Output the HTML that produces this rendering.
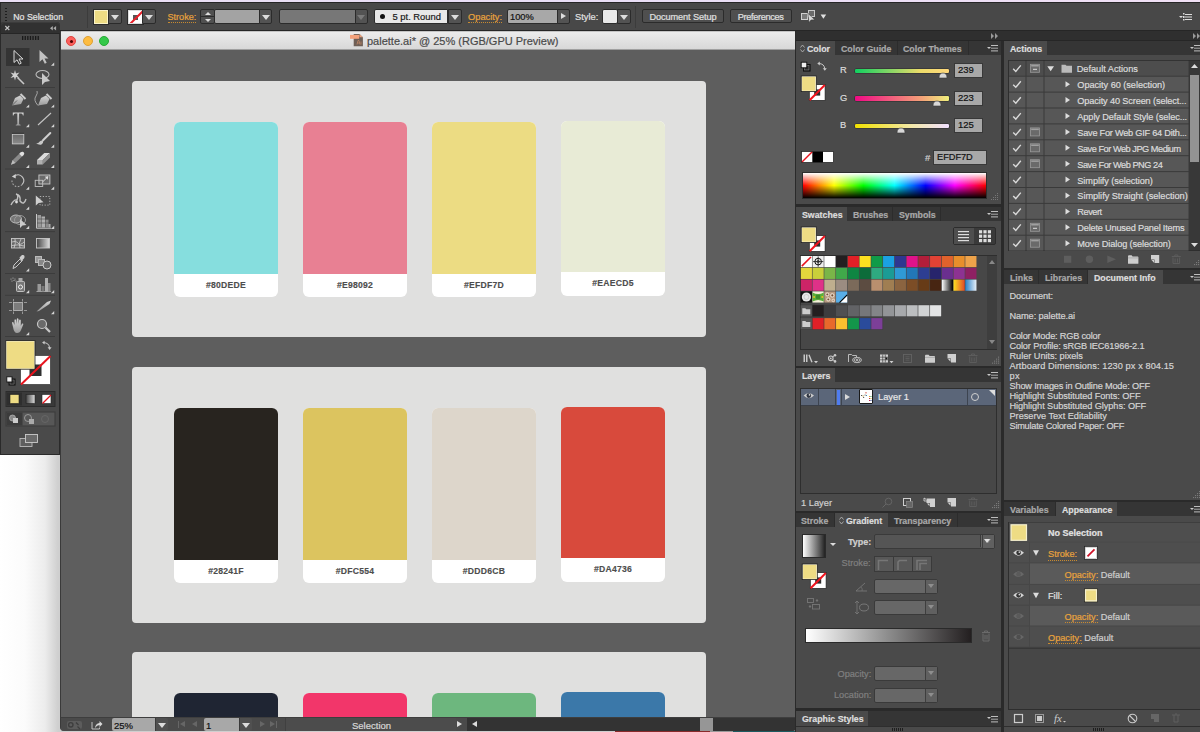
<!DOCTYPE html>
<html><head><meta charset="utf-8">
<style>
*{box-sizing:border-box;margin:0;padding:0}
html,body{width:1200px;height:732px;overflow:hidden;background:#fff;font-family:"Liberation Sans",sans-serif;}
.a{position:absolute}
svg{position:absolute;overflow:visible}
#desk{left:0;top:0;width:1200px;height:732px;background:linear-gradient(90deg,#ffffff 0,#fbfbfb 25px,#ececec 45px,#cfcfcf 58px)}
#lav{left:0;top:0;width:1200px;height:3px;background:linear-gradient(90deg,#eadff4,#e9def6 50%,#f0e0f4);border-bottom:1px solid #262626}
#ctrl{left:0;top:3px;width:1200px;height:28px;background:#484848;border-bottom:1px solid #262626;border-left:1px solid #2a2a2a}
.tx{position:absolute;white-space:nowrap;color:#d2d2d2;font-size:9px;line-height:11px}
.or{color:#e6a23e;border-bottom:1px dotted #c88a30;line-height:9px}
.btn{position:absolute;background:#4f4f4f;border:1px solid #2b2b2b;border-radius:2px}
.dd{position:absolute;background:#535353;border:1px solid #2b2b2b;border-radius:0 2px 2px 0}
.dd:after{content:"";position:absolute;left:50%;top:50%;margin:-2px 0 0 -4px;border-left:4px solid transparent;border-right:4px solid transparent;border-top:5px solid #dcdcdc}
.fld{position:absolute;border:1px solid #2b2b2b;border-radius:2px 0 0 2px}
.sw{position:absolute;width:104px;height:175px;background:#fff;border-radius:6px;overflow:hidden}
.sw .c{height:152px}
.sw .t{height:23px;text-align:center;font-weight:bold;font-size:8.6px;line-height:23px;color:#4d4d4d;letter-spacing:0.25px;-webkit-text-stroke:0.15px #4d4d4d}
.pn{position:absolute;background:#4a4a4a}
.tabbar{position:absolute;background:#353535;height:14px}
.tab{position:absolute;top:0;height:14px;font-weight:bold;font-size:8.8px;line-height:16px;color:#a9a9a9;white-space:nowrap;border-right:1px solid #2c2c2c}
.tab.on{background:#4a4a4a;color:#dedede;border-right:none}
.menu{position:absolute;width:12px;height:8px}
.menu:before{content:"";position:absolute;left:0;top:2.2px;border-left:2px solid transparent;border-right:2px solid transparent;border-top:2.5px solid #c8c8c8}
.menu:after{content:"";position:absolute;left:4.4px;top:0.5px;width:7px;height:1.3px;background:#bdbdbd;box-shadow:0 2.7px 0 #a8a8a8,0 5.4px 0 #bdbdbd}
.pt{position:absolute;white-space:nowrap;color:#d0d0d0;font-size:9.2px;line-height:11px}
.dim{color:#808080}
.ddb{position:absolute;background:#676767;border:1px solid #3a3a3a;border-radius:2px}
.ddb:after{content:"";position:absolute;right:0;top:0;width:11px;height:100%;border-left:1px solid #3e3e3e;background:#606060}
.ddb:before{content:"";position:absolute;right:3px;top:50%;margin-top:-2px;border-left:3px solid transparent;border-right:3px solid transparent;border-top:4px solid #8e8e8e;z-index:1}
.pt.or,.tx.or,span.or{color:#e8a33d}
.pt,.tx,.tab{-webkit-text-stroke:0.2px currentColor}
.dimdd:after{border-top-color:#7a7a7a}
</style></head><body>
<div id="desk" class="a"></div>
<div id="lav" class="a"></div>
<div id="ctrl" class="a">
  <div class="a" style="left:4px;top:5px;width:2px;height:17px;background:repeating-linear-gradient(#1e1e1e 0 1.5px,transparent 1.5px 3px)"></div>
  <div class="tx" style="left:12.2px;top:8.8px;font-size:8.8px;color:#e4e4e4">No Selection</div>
  <div class="a" style="left:86px;top:3px;width:1px;height:22px;background:#3c3c3c"></div>
  <div class="a" style="left:92.6px;top:6.5px;width:14.5px;height:14.5px;background:#eedc84;border:1px solid #fbf3c8;box-shadow:0 0 0 1px #2b2b2b"></div>
  <div class="dd" style="left:107.1px;top:6px;width:14px;height:15px"></div>
  <div class="a" style="left:127.1px;top:6.5px;width:14.5px;height:14.5px;background:#fff;border:1px solid #ddd;box-shadow:0 0 0 1px #2b2b2b;overflow:hidden">
    <div class="a" style="left:4px;top:4px;width:5px;height:5px;background:#555"></div>
    <div class="a" style="left:-3px;top:6px;width:20px;height:2px;background:#e8202a;transform:rotate(-45deg)"></div>
  </div>
  <div class="dd" style="left:141.1px;top:6px;width:14px;height:15px"></div>
  <div class="tx or" style="left:166.5px;top:10px;font-size:9.1px">Stroke:</div>
  <div class="btn" style="left:199.1px;top:6px;width:15px;height:15px;background:#505050"></div>
  <div class="a" style="left:200.1px;top:13px;width:13px;height:1px;background:#2b2b2b"></div>
  <div class="a" style="left:204.1px;top:9px;border-left:3px solid transparent;border-right:3px solid transparent;border-bottom:3px solid #ddd"></div>
  <div class="a" style="left:204.1px;top:16px;border-left:3px solid transparent;border-right:3px solid transparent;border-top:3px solid #ddd"></div>
  <div class="fld" style="left:213.1px;top:6px;width:46px;height:15px;background:#a3a3a3"></div>
  <div class="dd" style="left:258.1px;top:6px;width:13px;height:15px"></div>
  <div class="fld" style="left:277.5px;top:6px;width:77px;height:15px;background:#777"></div>
  <div class="dd dimdd" style="left:353.5px;top:6px;width:13.5px;height:15px"></div>
  <div class="fld" style="left:373px;top:6px;width:74px;height:15px;background:#e8e8e8"></div>
  <div class="a" style="left:378.8px;top:11.3px;width:5px;height:5px;border-radius:50%;background:#111"></div>
  <div class="tx" style="left:391.5px;top:8.2px;color:#1a1a1a;font-size:9.4px">5 pt. Round</div>
  <div class="dd" style="left:446.5px;top:6px;width:14px;height:15px"></div>
  <div class="tx or" style="left:467px;top:10px;font-size:9.3px">Opacity:</div>
  <div class="fld" style="left:506px;top:6px;width:51px;height:15px;background:#a8a8a8"></div>
  <div class="tx" style="left:509px;top:9px;color:#111;font-size:9.3px">100%</div>
  <div class="btn" style="left:556px;top:6px;width:13px;height:15px;background:#535353;border-radius:0 2px 2px 0"></div>
  <div class="a" style="left:560px;top:10px;border-top:3.5px solid transparent;border-bottom:3.5px solid transparent;border-left:5px solid #ddd;z-index:2"></div>
  <div class="tx" style="left:574px;top:9px;font-size:9.3px;color:#e0e0e0">Style:</div>
  <div class="btn" style="left:601px;top:6px;width:16px;height:15px;background:#e8e8e8;border-color:#2b2b2b"></div>
  <div class="dd" style="left:616px;top:6px;width:14px;height:15px"></div>
  <div class="a" style="left:634px;top:3px;width:1px;height:22px;background:#3c3c3c"></div>
  <div class="btn" style="left:641px;top:6px;width:82px;height:14px"></div>
  <div class="tx" style="left:648.5px;top:9px;font-size:9.2px;color:#e0e0e0;letter-spacing:-0.102px">Document Setup</div>
  <div class="btn" style="left:729px;top:6px;width:62px;height:14px"></div>
  <div class="tx" style="left:736.7px;top:9px;font-size:9.2px;color:#e0e0e0;letter-spacing:-0.330px">Preferences</div>
  <svg style="left:0;top:-3px" width="840" height="30" viewBox="0 0 840 30"><rect x="800.5" y="13.5" width="6" height="6" fill="#7a7a7a" stroke="#d0d0d0" stroke-width="1"/><rect x="807.5" y="10.5" width="6" height="6" fill="#6a6a6a" stroke="#c8c8c8" stroke-width="1"/><path d="M806.8 13.2 L813.8 19.8 L810 20 L808 22.5Z" fill="#d8d8d8" stroke="#333" stroke-width="0.5"/><path d="M819.6 14.4 H825.2 L822.4 18.8Z" fill="#e0e0e0"/></svg>
  <svg style="left:1178px;top:10px" width="14" height="10" viewBox="0 0 14 10"><path d="M0 3 L4 3 L2 5Z" fill="#ddd"/><rect x="4" y="0" width="1.5" height="1.5" fill="#ddd"/><rect x="4" y="3" width="1.5" height="2" fill="#ddd"/><rect x="4" y="6" width="1.5" height="1.5" fill="#ddd"/><rect x="6" y="1" width="7" height="1" fill="#ddd"/><rect x="6" y="3.5" width="7" height="1" fill="#ddd"/><rect x="6" y="6" width="7" height="1" fill="#ddd"/></svg>
</div>
<div class="a" style="left:60px;top:31px;width:736px;height:700px;background:#5e5e5e;border-radius:0 0 4px 4px;overflow:hidden;border-left:1px solid #3a3a3a">
  <div class="a" style="left:0;top:0;width:735px;height:19px;background:linear-gradient(#c4c4c4 0,#c4c4c4 1px,#ebebeb 1.5px,#d8d8d8);border-bottom:1px solid #a0a0a0"></div>
  <div class="a" style="left:5px;top:5px;width:10px;height:10px;border-radius:50%;background:#fc605c;border:0.5px solid #e0443e"></div>
  <div class="a" style="left:8.5px;top:8.5px;width:3px;height:3px;border-radius:50%;background:#4d0000"></div>
  <div class="a" style="left:21.7px;top:5px;width:10px;height:10px;border-radius:50%;background:#fdbc40;border:0.5px solid #dea034"></div>
  <div class="a" style="left:38.3px;top:5px;width:10px;height:10px;border-radius:50%;background:#34c84a;border:0.5px solid #27aa35"></div>
  <svg style="left:289px;top:3px" width="14" height="13" viewBox="0 0 14 13"><path d="M3.7 0.1 H9.5 L12.9 3.2 V12.3 H3.7Z" fill="#6e5f56"/><path d="M9.5 0.1 L12.9 3.2 H9.5Z" fill="#e8a07c"/><rect x="0" y="0.9" width="9.2" height="3.9" fill="#f4a27c"/><path d="M7 10.5 L8 6.5 H9 L10 10.5 M7.5 9 H9.5 M11 7.5 V10.5" fill="none" stroke="#c88a66" stroke-width="0.7"/></svg>
  <div class="tx" style="left:306px;top:4px;color:#4a4a4a;font-size:11px;line-height:13px">palette.ai* @ 25% (RGB/GPU Preview)</div>
  <!-- artboards -->
  <div class="a" style="left:71px;top:50px;width:574px;height:256px;background:#e0e0df;border-radius:4px">
    <div class="a sw" style="left:42px;top:41px"><div class="c" style="background:#86dede"></div><div class="t">#80DEDE</div></div>
    <div class="a sw" style="left:171px;top:41px"><div class="c" style="background:#e88093"></div><div class="t">#E98092</div></div>
    <div class="a sw" style="left:300px;top:41px"><div class="c" style="background:#ecdc83"></div><div class="t">#EFDF7D</div></div>
    <div class="a sw" style="left:429px;top:40px"><div class="c" style="background:#e8ebd6;height:151px"></div><div class="t">#EAECD5</div></div>
  </div>
  <div class="a" style="left:71px;top:336px;width:574px;height:256px;background:#e0e0df;border-radius:4px">
    <div class="a sw" style="left:42px;top:41px"><div class="c" style="background:#28241f"></div><div class="t">#28241F</div></div>
    <div class="a sw" style="left:171px;top:41px"><div class="c" style="background:#dcc45f"></div><div class="t">#DFC554</div></div>
    <div class="a sw" style="left:300px;top:41px"><div class="c" style="background:#ddd6cb"></div><div class="t">#DDD6CB</div></div>
    <div class="a sw" style="left:429px;top:39.5px"><div class="c" style="background:#d84a3c;height:151px"></div><div class="t">#DA4736</div></div>
  </div>
  <div class="a" style="left:71px;top:621px;width:574px;height:256px;background:#e0e0df;border-radius:4px">
    <div class="a sw" style="left:42px;top:41px"><div class="c" style="background:#1f2533"></div></div>
    <div class="a sw" style="left:171px;top:41px"><div class="c" style="background:#f2366a"></div></div>
    <div class="a sw" style="left:300px;top:41px"><div class="c" style="background:#6db77e"></div></div>
    <div class="a sw" style="left:429px;top:39.5px"><div class="c" style="background:#3b78a9"></div></div>
  </div>
  <!-- status bar -->
  <div class="a" style="left:0;top:686px;width:735px;height:14px;background:#4a4a4a;border-top:1px solid #3e3e3e"></div>
  <div class="a" style="left:5.8px;top:689.8px;width:15.5px;height:8px;border-radius:2px;background:#5c5c5c"></div>
  <svg style="left:0;top:686px" width="50" height="14" viewBox="0 0 50 14"><circle cx="9.8" cy="7.8" r="2.2" fill="none" stroke="#3e3e3e" stroke-width="1.4"/><path d="M15 5.5 L17.5 8 M16.5 9.5 L19 12" stroke="#3e3e3e" stroke-width="1.3"/>
  <path d="M31 5 V12 H38.5 V10.5" fill="none" stroke="#c0c0c0" stroke-width="1"/><path d="M34 11 Q34.5 6.5 38.5 6 V4 L41.5 7 L38.5 10 V8 Q36 8 34 11Z" fill="#d8d8d8"/></svg>
  <div class="fld" style="left:51px;top:687px;width:43px;height:13px;background:#a8a8a8;border:none"></div>
  <div class="tx" style="left:53px;top:689px;color:#111;font-size:9.5px">25%</div>
  <div class="dd" style="left:94px;top:687px;width:13px;height:13px;background:#505050;border:none;border-left:1px solid #3a3a3a"></div>
  <div class="a" style="left:117px;top:690px;width:1px;height:7px;background:#666"></div>
  <div class="a" style="left:119px;top:690px;border-top:3.5px solid transparent;border-bottom:3.5px solid transparent;border-right:5px solid #666"></div>
  <div class="a" style="left:131px;top:690px;border-top:3.5px solid transparent;border-bottom:3.5px solid transparent;border-right:5px solid #666"></div>
  <div class="fld" style="left:143px;top:687px;width:35px;height:13px;background:#a8a8a8;border:none"></div>
  <div class="tx" style="left:145px;top:689px;color:#111;font-size:9.5px">1</div>
  <div class="dd" style="left:178px;top:687px;width:13px;height:13px;background:#505050;border:none;border-left:1px solid #3a3a3a"></div>
  <div class="a" style="left:199px;top:690px;border-top:3.5px solid transparent;border-bottom:3.5px solid transparent;border-left:5px solid #666"></div>
  <div class="a" style="left:209px;top:690px;border-top:3.5px solid transparent;border-bottom:3.5px solid transparent;border-left:5px solid #666"></div>
  <div class="a" style="left:215px;top:690px;width:1px;height:7px;background:#666"></div>
  <div class="a" style="left:224px;top:687px;width:171px;height:13px;background:#4c4c4c;border-left:1px solid #404040"></div>
  <div class="tx" style="left:291px;top:689px;color:#d8d8d8;font-size:9.5px">Selection</div>
  <div class="a" style="left:396px;top:690px;border-top:3.5px solid transparent;border-bottom:3.5px solid transparent;border-left:5px solid #ddd"></div>
  <div class="a" style="left:406px;top:687px;width:329px;height:13px;background:#333"></div>
  <div class="a" style="left:411px;top:690px;border-top:3.5px solid transparent;border-bottom:3.5px solid transparent;border-right:5px solid #ddd"></div>
  <div class="a" style="left:639px;top:687px;width:13px;height:13px;background:#969696"></div>
</div>
<div class="a" style="left:0;top:22px;width:60px;height:432.5px;background:#4a4a4a;border:1px solid #2a2a2a;border-top:none;border-radius:4px 4px 0 0"></div>
<div class="a" style="left:1px;top:22.4px;width:58.5px;height:11.6px;background:#313131;border-radius:4px 4px 0 0;border-bottom:1px solid #262626;box-shadow:inset 0 1px 0 #3c3c3c"></div>
<svg style="left:0;top:22px" width="61" height="433" viewBox="0 0 61 433">
 <g stroke="#c4c4c4" stroke-width="1.1" fill="none"><path d="M5.3 4 L9.3 8 M9.3 4 L5.3 8"/></g>
 <path d="M50 6.2 L52.8 4 V8.4Z M53.3 6.2 L56.1 4 V8.4Z" fill="#aaa"/>
 <g fill="#1a1a1a"><rect x="22.0" y="14" width="1.3" height="4"/><rect x="24.6" y="14" width="1.3" height="4"/><rect x="27.2" y="14" width="1.3" height="4"/><rect x="29.8" y="14" width="1.3" height="4"/><rect x="32.4" y="14" width="1.3" height="4"/><rect x="35.0" y="14" width="1.3" height="4"/><rect x="37.6" y="14" width="1.3" height="4"/></g>
 <g stroke="#3c3c3c" stroke-width="1"><path d="M5 65.5 H55 M5 147 H55 M5 209.6 H55 M5 251.5 H55 M5 273.3 H55 M5 314.5 H55"/></g>
</svg>
<svg style="left:0;top:0" width="61" height="460" viewBox="0 0 61 460">
 <defs><linearGradient id="tg" x1="0" y1="0" x2="0" y2="1"><stop offset="0" stop-color="#d6d6d6"/><stop offset="1" stop-color="#9a9a9a"/></linearGradient></defs>
 <rect x="6" y="48" width="23.5" height="18" fill="#343434"/>
 <!-- selection -->
 <path d="M14 50.5 L14 62.5 L17 59.8 L19.3 64.2 L21.2 63.2 L19 59 L23 59Z" fill="#3a3a3a" stroke="#d8d8d8" stroke-width="1"/>
 <!-- direct select -->
 <path d="M39.5 50 L39.5 62 L42.5 59.3 L44.8 63.7 L46.7 62.7 L44.5 58.5 L48.5 58.5Z" fill="#c2c2c2"/>
 <g fill="#d4d4d4"><path d="M51 65.8 L54.2 62.599999999999994 V65.8Z M26 107.6 L29.2 104.39999999999999 V107.6Z M51 107.6 L54.2 104.39999999999999 V107.6Z M26 127.3 L29.2 124.1 V127.3Z M51 127.3 L54.2 124.1 V127.3Z M26 147.8 L29.2 144.60000000000002 V147.8Z M51 147.8 L54.2 144.60000000000002 V147.8Z M26 167.9 L29.2 164.70000000000002 V167.9Z M51 167.9 L54.2 164.70000000000002 V167.9Z M26 189.7 L29.2 186.5 V189.7Z M51 189.7 L54.2 186.5 V189.7Z M26 209.8 L29.2 206.60000000000002 V209.8Z M26 229 L29.2 225.8 V229Z M51 229 L54.2 225.8 V229Z M26 271.5 L29.2 268.3 V271.5Z M26 293.3 L29.2 290.1 V293.3Z M51 293.3 L54.2 290.1 V293.3Z M51 314.3 L54.2 311.1 V314.3Z M26 335.3 L29.2 332.1 V335.3Z "/></g>
 <!-- magic wand -->
 <path d="M15 70 L16 73.5 L19.5 72.5 L17 75.2 L19.5 78 L16 77 L15 80.5 L14 77 L10.5 78 L13 75.2 L10.5 72.5 L14 73.5Z" fill="#d0d0d0"/>
 <path d="M17.5 77.5 L24 84" stroke="#c8c8c8" stroke-width="1.6"/>
 <!-- lasso -->
 <ellipse cx="42.5" cy="74.5" rx="6.5" ry="4" fill="none" stroke="#bbb" stroke-width="1.1"/>
 <path d="M42 73 L42 85 L45 82 L50 81Z" fill="#c8c8c8"/>
 <!-- pen -->
 <path d="M12 105.5 L15 98 L20 95.5 L23.5 99 L21 104 Z" fill="url(#tg)"/><path d="M20.5 94 L25.5 99" stroke="#ccc" stroke-width="2"/><path d="M12 105.5 L17 100.5" stroke="#555" stroke-width="0.8"/>
 <!-- curvature pen -->
 <path d="M38 105.5 L41 98 L46 95.5 L49.5 99 L47 104 Z" fill="url(#tg)"/><path d="M46.5 94 L51.5 99" stroke="#ccc" stroke-width="2"/><path d="M38 105.5 Q33 100 36 96 Q38 93 37 91" fill="none" stroke="#bbb" stroke-width="0.8"/>
 <!-- type -->
 <path d="M12.8 112.5 H23.6 V115.5 H22.9 Q22.6 113.6 21.3 113.6 H19.1 V123.8 Q19.2 124.8 20.6 124.8 V125.5 H15.8 V124.8 Q17.2 124.8 17.3 123.8 V113.6 H15.1 Q13.8 113.6 13.5 115.5 H12.8Z" fill="url(#tg)"/>
 <!-- line -->
 <path d="M38 125 L51 113" stroke="#c4c4c4" stroke-width="1.1"/>
 <!-- rect -->
 <defs><linearGradient id="rg" x1="0" y1="0" x2="0" y2="1"><stop offset="0" stop-color="#6a6a6a"/><stop offset="1" stop-color="#8c8c8c"/></linearGradient></defs>
 <rect x="12.3" y="134.3" width="11.5" height="9.6" fill="url(#rg)" stroke="#cfcfcf" stroke-width="0.8"/><path d="M12 133.3 H24" stroke="#222" stroke-width="0.6"/>
 <!-- brush -->
 <path d="M50.3 133 L43 140.3" stroke="#cfcfcf" stroke-width="2" stroke-linecap="round"/>
 <path d="M35.5 143.3 Q38 143.8 40 141.2 Q41.5 140 43.2 141 Q43.5 143.5 41.5 144.6 Q39 145.3 35.5 143.3Z" fill="#c8c8c8"/>
 <!-- pencil -->
 <path d="M11 164.7 L12.6 160.3 L20.8 152.3 Q22.5 151 23.8 152.5 Q24.8 153.8 23.6 155.1 L15.4 163.1Z" fill="#8a8a8a"/>
 <path d="M20.8 152.3 Q22.5 151 23.8 152.5 Q24.8 153.8 23.6 155.1 L22 156.6 L19.3 153.8Z" fill="#e0e0e0"/>
 <path d="M11 164.7 L12.6 160.3 L15.4 163.1Z" fill="#bdbdbd"/>
 <!-- eraser -->
 <path d="M37 160 L44.3 153 H50 L42.8 160Z" fill="#dcdcdc"/><path d="M37 160 H42.8 V164.5 H37Z" fill="#b0b0b0"/><path d="M42.8 160 L50 153 V157.5 L42.8 164.5Z" fill="#8e8e8e"/>
 <!-- rotate -->
 <path d="M15.2 175.6 A5.7 5.7 0 0 1 22 184.6" fill="none" stroke="#c4c4c4" stroke-width="1.1"/>
 <path d="M22 184.6 A5.7 5.7 0 0 1 12 180.3" fill="none" stroke="#a8a8a8" stroke-width="1.1" stroke-dasharray="1.6 1.5"/>
 <path d="M11.8 176.6 L15.8 174 L15.7 178.4Z" fill="#d0d0d0"/>
 <!-- scale -->
 <rect x="38.9" y="175" width="11" height="9" fill="#6a6a6a" stroke="#c8c8c8" stroke-width="0.9"/>
 <rect x="35.2" y="180.3" width="7.5" height="6.2" fill="none" stroke="#c0c0c0" stroke-width="0.9"/>
 <path d="M42.5 182 L47.8 176.8" stroke="#e0e0e0" stroke-width="0.9"/><path d="M48.3 176.3 L44.8 176.8 L47.8 179.8Z" fill="#e0e0e0"/>
 <!-- width -->
 <path d="M11 205 Q14 199 17 200 Q19 195 16 194 Q21 195 20 201 Q24 206 26 199" fill="none" stroke="#c0c0c0" stroke-width="1.4"/>
 <circle cx="16.5" cy="202" r="1.4" fill="#ddd"/>
 <!-- free transform -->
 <rect x="40" y="196.5" width="9.8" height="8.6" fill="none" stroke="#bbb" stroke-width="0.9" stroke-dasharray="1.2 1.6"/>
 <path d="M35.8 195.5 L35.8 205.5 L38.6 203 L43.5 202.3Z" fill="#cfcfcf"/>
 <!-- shape builder -->
 <ellipse cx="16" cy="219" rx="5.5" ry="4" fill="#777" stroke="#bbb"/><ellipse cx="20" cy="220" rx="5.5" ry="4.5" fill="none" stroke="#999"/>
 <path d="M20 219 L20 228 L22.5 225.5 L26.5 225Z" fill="#ccc"/>
 <!-- graph -->
 <path d="M36.5 214 V228.2 H51" fill="none" stroke="#c8c8c8" stroke-width="1"/>
 <rect x="37.5" y="215" width="3.5" height="12.5" fill="#9a9a9a"/><rect x="41.5" y="216.5" width="3.5" height="11" fill="#b0b0b0"/><rect x="45.5" y="219.5" width="3" height="8" fill="#8a8a8a"/><rect x="48.5" y="224" width="2" height="3.5" fill="#aaa"/>
 <path d="M37 219 H49 M37 223 H49" stroke="#4a4a4a" stroke-width="0.6"/>
 <!-- mesh -->
 <rect x="11.5" y="238.5" width="13" height="9.5" fill="#6a6a6a" stroke="#c8c8c8" stroke-width="0.9"/><path d="M12 242 Q16 240 18 243 T24 242 M14 248 Q16 244 15 239 M20 248 Q18 243 21 239 M12 245.5 Q18 244 24 246" fill="none" stroke="#ddd" stroke-width="0.7"/>
 <!-- gradient tool -->
 <defs><linearGradient id="gg" x1="0" x2="1"><stop offset="0" stop-color="#444"/><stop offset="1" stop-color="#ddd"/></linearGradient></defs>
 <rect x="36.5" y="238.5" width="13" height="9.5" fill="url(#gg)" stroke="#c8c8c8" stroke-width="0.9"/>
 <!-- eyedropper -->
 <path d="M13 268.5 L14 265 L20.5 258.5 L22.5 260.5 L16 267Z" fill="none" stroke="#c8c8c8" stroke-width="1"/><path d="M19.5 257.5 L22 255 Q24 254.5 24.5 256 Q25 258 23 259.5 L21 261.5Z" fill="#ccc"/>
 <!-- blend -->
 <rect x="35.5" y="256.5" width="6" height="6" fill="#999" stroke="#bbb"/><rect x="38.5" y="259.5" width="6" height="6" fill="#888" stroke="#bbb"/><circle cx="47" cy="265" r="4" fill="#666" stroke="#ccc"/>
 <!-- symbol sprayer -->
 <g fill="#bbb"><circle cx="11" cy="279" r="0.6"/><circle cx="13" cy="278" r="0.6"/><circle cx="15" cy="279" r="0.6"/><circle cx="12" cy="281" r="0.6"/><circle cx="14" cy="280.5" r="0.6"/><circle cx="16" cy="281" r="0.6"/></g>
 <rect x="16.5" y="281.5" width="8" height="10" rx="1" fill="#777" stroke="#c0c0c0"/><rect x="18.5" y="278" width="4" height="3.5" fill="#aaa"/><circle cx="20.5" cy="287" r="2" fill="none" stroke="#eee" stroke-width="1"/>
 <!-- column graph -->
 <path d="M36.5 291.5 H51" stroke="#aaa"/><rect x="37.5" y="284" width="3.5" height="7.5" fill="#999"/><rect x="41.5" y="286" width="3" height="5.5" fill="#777"/><rect x="45" y="278" width="3" height="13.5" fill="#b0b0b0"/><rect x="48" y="283" width="2.5" height="8.5" fill="#888"/>
 <!-- artboard -->
 <rect x="13.5" y="302.5" width="9" height="8" fill="#7c7c7c" stroke="#c0c0c0" stroke-width="0.8"/><path d="M9 302.5 H12 M24 302.5 H27 M9 310.5 H12 M24 310.5 H27 M13.5 299 V301.5 M22.5 299 V301.5 M13.5 311.5 V314 M22.5 311.5 V314" stroke="#aaa" stroke-width="0.8"/>
 <!-- slice/knife -->
 <path d="M36.5 311.5 L47 302 L51 300.5 L49.5 304 L39 311Z" fill="url(#tg)"/>
 <!-- hand -->
 <path d="M13 327 L12 323 Q12 321.5 13.2 322 L14.5 325 L14.5 320 Q15 318.5 16 320 L16.5 324 L16.8 319 Q17.5 317.5 18.5 319 L18.6 324 L19.2 320 Q20 318.8 20.8 320.3 L20.8 326 L22 323.5 Q23.5 323 23.3 324.5 L21 330 Q20 333 17 333 Q14 333 13 327Z" fill="url(#tg)"/>
 <!-- zoom -->
 <circle cx="42" cy="324" r="4.5" fill="#6a6a6a" stroke="#c8c8c8" stroke-width="1.2"/><path d="M45.5 327.5 L50 332" stroke="#c8c8c8" stroke-width="2.2"/>
 <!-- fill/stroke -->

 <path d="M43.3 342.6 Q49.3 342.6 49.6 348.3" fill="none" stroke="#c8c8c8" stroke-width="1"/><path d="M44.6 340.7 L42.1 342.6 L44.6 344.5Z M47.6 347.3 L49.6 349.9 L51.6 347.3Z" fill="#c8c8c8"/>
 <rect x="20.5" y="355.5" width="30" height="29" fill="#fff" stroke="#222" stroke-width="0.6"/>
 <rect x="29.5" y="364.5" width="12" height="11.5" fill="#2f2f2f"/>
 <rect x="5.8" y="340.6" width="29.2" height="28.6" fill="#f2ecc4" stroke="#1e1e1e" stroke-width="0.8"/><rect x="6.8" y="341.6" width="27.2" height="26.6" fill="#eedc84"/>
 <path d="M21 384.5 L50.5 356" stroke="#e8141e" stroke-width="2"/>
 <rect x="9.3" y="379.3" width="5.5" height="5.5" fill="#2a2a2a" stroke="#111" stroke-width="1.5"/><rect x="10" y="380" width="4.1" height="4.1" fill="none" stroke="#9a9a9a" stroke-width="0.5"/><rect x="6.8" y="376.8" width="5.2" height="5.2" fill="#eee" stroke="#111" stroke-width="0.9"/>
 <!-- color mode row -->
 <rect x="6" y="391.5" width="49" height="15" fill="#3a3a3a" stroke="#2c2c2c"/>
 <rect x="7" y="392.5" width="15" height="13" fill="#2e2e2e"/>
 <rect x="10" y="394.5" width="9" height="9" fill="#eedc84" stroke="#222" stroke-width="0.6"/>
 <rect x="26" y="394.5" width="9" height="9" fill="url(#gg)" stroke="#222" stroke-width="0.6"/>
 <rect x="42" y="394.5" width="9" height="9" fill="#fff" stroke="#222" stroke-width="0.6"/><path d="M42.5 403.5 L51 395" stroke="#e8141e" stroke-width="1.3"/>
 <!-- draw modes -->
 <rect x="6" y="412" width="49" height="14" fill="#575757" stroke="#3a3a3a"/>
 <rect x="6.5" y="412.5" width="16" height="13" fill="#3b3b3b"/>
 <circle cx="12.5" cy="418" r="3" fill="#888" stroke="#bbb" stroke-width="0.7"/><rect x="13" y="418" width="5" height="5" fill="#ccc"/>
 <circle cx="28" cy="418" r="3.5" fill="none" stroke="#aaa" stroke-width="0.8"/><rect x="29" y="419" width="5" height="5" fill="#aaa"/>
 <circle cx="45" cy="419" r="3.5" fill="none" stroke="#6a6a6a" stroke-width="0.8"/>
 <!-- screen mode -->
 <rect x="20" y="438.5" width="12" height="8" fill="#5f5f5f" stroke="#bbb" stroke-width="0.9"/><rect x="25.5" y="434.5" width="12" height="8" fill="#6a6a6a" stroke="#ccc" stroke-width="0.9"/>
</svg>
<div class="a" style="left:795px;top:31px;width:405px;height:701px;background:#2a2a2a"></div>
<div class="a" style="left:796px;top:31px;width:404px;height:10px;background:#2f2f2f;border-bottom:1px solid #262626"></div>
<svg style="left:991px;top:33px" width="8" height="6" viewBox="0 0 8 6"><path d="M0 0 L3 3 L0 6Z M4 0 L7 3 L4 6Z" fill="#999"/></svg>
<svg style="left:1193px;top:33px" width="8" height="6" viewBox="0 0 8 6"><path d="M0 0 L3 3 L0 6Z M4 0 L7 3 L4 6Z" fill="#999"/></svg>
<div class="pn" style="left:796px;top:41px;width:205px;height:163px"></div>
<div class="tabbar" style="left:796px;top:41px;width:205px"></div>
<div class="tab on" style="left:796px;top:41px;width:39px;padding-left:11px">Color</div>
<svg style="left:800px;top:44px" width="5" height="9" viewBox="0 0 5 9"><path d="M0.5 3.5 L2.5 1 L4.5 3.5 M0.5 5.5 L2.5 8 L4.5 5.5" fill="none" stroke="#bbb" stroke-width="0.8"/></svg>
<div class="tab" style="left:835px;top:41px;width:63px;padding-left:6px">Color Guide</div>
<div class="tab" style="left:898px;top:41px;width:71px;padding-left:5px">Color Themes</div>
<div class="menu" style="left:987px;top:44.5px"></div>
<svg style="left:800px;top:61px" width="28" height="12" viewBox="0 0 28 12"><rect x="3.8" y="3.8" width="6" height="6" fill="#2a2a2a" stroke="#111" stroke-width="1.6"/><rect x="4.6" y="4.6" width="4.4" height="4.4" fill="none" stroke="#9a9a9a" stroke-width="0.5"/><rect x="1.2" y="1.2" width="5.6" height="5.6" fill="#eee" stroke="#111" stroke-width="0.9"/><path d="M18.5 2.5 Q24.5 2.5 24.8 8.2" fill="none" stroke="#c8c8c8" stroke-width="1"/><path d="M19.8 0.6 L17.3 2.5 L19.8 4.4Z M22.8 7.2 L24.8 9.8 L26.8 7.2Z" fill="#c8c8c8"/></svg>
<svg style="left:801px;top:76px" width="26" height="26" viewBox="0 0 26 26"><rect x="8.3" y="8.6" width="15.8" height="15.8" fill="#fff" stroke="#1e1e1e" stroke-width="0.7"/><rect x="13.2" y="13.4" width="6" height="6.2" fill="#2e2e2e"/><rect x="0.2" y="0" width="15.1" height="15.6" fill="#fdf8e0" stroke="#1e1e1e" stroke-width="0.8"/><rect x="1.1" y="0.9" width="13.3" height="13.8" fill="#eedc84"/><path d="M8.6 24.2 L23.8 9" stroke="#f0141e" stroke-width="2"/></svg>
<div class="pt" style="left:840px;top:65px;font-size:9.3px;color:#dcdcdc">R</div>
<div class="a" style="left:854.5px;top:68.6px;width:94.5px;height:4.6px;border-radius:1.2px;background:linear-gradient(90deg,#10d060,#eedc6a 70%,#ffd87c);box-shadow:0 0 0 0.6px #2a2a2a"></div>
<svg style="left:938px;top:72px" width="10" height="6" viewBox="0 0 10 6"><path d="M1 6 Q1 1 5 1 Q9 1 9 6Z" fill="#d8d8d8" stroke="#3a3a3a" stroke-width="0.6"/></svg>
<div class="a" style="left:954px;top:63px;width:28.5px;height:15px;background:#a8a8a8;border:1px solid #383838"></div>
<div class="pt" style="left:958px;top:64px;color:#111;font-size:9.5px">239</div>
<div class="pt" style="left:840px;top:92.5px;font-size:9.3px;color:#dcdcdc">G</div>
<div class="a" style="left:854.5px;top:96.1px;width:94.5px;height:4.6px;border-radius:1.2px;background:linear-gradient(90deg,#ef0a84,#f4a078 70%,#f0f07c);box-shadow:0 0 0 0.6px #2a2a2a"></div>
<svg style="left:932px;top:99.5px" width="10" height="6" viewBox="0 0 10 6"><path d="M1 6 Q1 1 5 1 Q9 1 9 6Z" fill="#d8d8d8" stroke="#3a3a3a" stroke-width="0.6"/></svg>
<div class="a" style="left:954px;top:90.5px;width:28.5px;height:15px;background:#a8a8a8;border:1px solid #383838"></div>
<div class="pt" style="left:958px;top:91.5px;color:#111;font-size:9.5px">223</div>
<div class="pt" style="left:840px;top:120px;font-size:9.3px;color:#dcdcdc">B</div>
<div class="a" style="left:854.5px;top:123.6px;width:94.5px;height:4.6px;border-radius:1.2px;background:linear-gradient(90deg,#f0e000,#f3e8a8 60%,#f0e0ff);box-shadow:0 0 0 0.6px #2a2a2a"></div>
<svg style="left:896px;top:127px" width="10" height="6" viewBox="0 0 10 6"><path d="M1 6 Q1 1 5 1 Q9 1 9 6Z" fill="#d8d8d8" stroke="#3a3a3a" stroke-width="0.6"/></svg>
<div class="a" style="left:954px;top:118px;width:28.5px;height:15px;background:#a8a8a8;border:1px solid #383838"></div>
<div class="pt" style="left:958px;top:119px;color:#111;font-size:9.5px">125</div>
<svg style="left:800.5px;top:151px" width="34" height="12" viewBox="0 0 34 12"><rect x="0.5" y="0.5" width="11" height="11" fill="#fff"/><path d="M0.5 11.5 L11.5 0.5" stroke="#e8141e" stroke-width="1.4"/><rect x="11.5" y="0.5" width="10.5" height="11" fill="#000"/><rect x="22" y="0.5" width="10.5" height="11" fill="#fff"/><rect x="0.5" y="0.5" width="32" height="11" fill="none" stroke="#2a2a2a" stroke-width="0.8"/></svg>
<div class="pt" style="left:925px;top:152px;font-size:9.5px">#</div>
<div class="a" style="left:933px;top:150px;width:53.5px;height:14.5px;background:#a8a8a8;border:1px solid #383838"></div>
<div class="pt" style="left:937px;top:152px;color:#111;font-size:9.2px">EFDF7D</div>
<div class="a" style="left:801.5px;top:171.5px;width:185px;height:27.5px;background:linear-gradient(180deg,rgba(255,255,255,1) 0,rgba(255,255,255,0) 50%,rgba(0,0,0,0) 50%,rgba(0,0,0,1) 100%),linear-gradient(90deg,#f00,#ff0 17%,#0f0 33%,#0ff 50%,#00f 67%,#f0f 83%,#f00);border:1px solid #2e2e2e"></div>
<svg style="left:991px;top:193px" width="8" height="8" viewBox="0 0 8 8"><g fill="#777"><rect x="6" y="0" width="1" height="1"/><rect x="4" y="2" width="1" height="1"/><rect x="6" y="2" width="1" height="1"/><rect x="2" y="4" width="1" height="1"/><rect x="4" y="4" width="1" height="1"/><rect x="6" y="4" width="1" height="1"/><rect x="0" y="6" width="1" height="1"/><rect x="2" y="6" width="1" height="1"/><rect x="4" y="6" width="1" height="1"/><rect x="6" y="6" width="1" height="1"/></g></svg>
<div class="pn" style="left:796px;top:207px;width:205px;height:159px"></div>
<div class="tabbar" style="left:796px;top:207px;width:205px"></div>
<div class="tab on" style="left:796px;top:207px;width:51px;padding-left:6px">Swatches</div>
<div class="tab" style="left:847px;top:207px;width:46px;padding-left:6px">Brushes</div>
<div class="tab" style="left:893px;top:207px;width:48px;padding-left:6px">Symbols</div>
<div class="menu" style="left:987px;top:210.5px"></div>
<svg style="left:801px;top:227px" width="26" height="26" viewBox="0 0 26 26"><rect x="8.3" y="8.6" width="15.8" height="15.8" fill="#fff" stroke="#1e1e1e" stroke-width="0.7"/><rect x="13.2" y="13.4" width="6" height="6.2" fill="#2e2e2e"/><rect x="0.2" y="0" width="15.1" height="15.6" fill="#fdf8e0" stroke="#1e1e1e" stroke-width="0.8"/><rect x="1.1" y="0.9" width="13.3" height="13.8" fill="#eedc84"/><path d="M8.6 24.2 L23.8 9" stroke="#f0141e" stroke-width="2"/></svg>
<div class="a" style="left:953px;top:227px;width:43px;height:18px;background:#3a3a3a;border:1px solid #2c2c2c;border-radius:2px"></div>
<div class="a" style="left:954px;top:228px;width:20px;height:16px;background:#4e4e4e"></div>
<svg style="left:958px;top:230px" width="34" height="12" viewBox="0 0 34 12"><g fill="#ddd"><rect x="0" y="1" width="11" height="1.2"/><rect x="0" y="4" width="11" height="1.2"/><rect x="0" y="7" width="11" height="1.2"/><rect x="0" y="10" width="11" height="1.2"/>
<rect x="21.0" y="0.2" width="3.2" height="3.2"/><rect x="25.4" y="0.2" width="3.2" height="3.2"/><rect x="29.8" y="0.2" width="3.2" height="3.2"/><rect x="21.0" y="4.6000000000000005" width="3.2" height="3.2"/><rect x="25.4" y="4.6000000000000005" width="3.2" height="3.2"/><rect x="29.8" y="4.6000000000000005" width="3.2" height="3.2"/><rect x="21.0" y="9.0" width="3.2" height="3.2"/><rect x="25.4" y="9.0" width="3.2" height="3.2"/><rect x="29.8" y="9.0" width="3.2" height="3.2"/></g></svg>
<div class="a" style="left:800px;top:255px;width:197px;height:95px;background:#474747;border:1px solid #2e2e2e"></div>
<div class="a" style="left:986.5px;top:256px;width:10px;height:93px;background:#3e3e3e"></div>
<svg style="left:988px;top:258px" width="8" height="90" viewBox="0 0 8 90"><path d="M1 6 L4 2 L7 6Z M1 82 L4 86 L7 82Z" fill="#888"/></svg>
<svg style="left:0;top:0" width="1000" height="340" viewBox="0 0 1000 340"><rect x="800.8" y="256" width="11.15" height="11.15" fill="#fff"/><path d="M801.8 266.15 L810.9499999999999 257" stroke="#e8141e" stroke-width="1.6"/><rect x="812.55" y="256" width="11.15" height="11.15" fill="#eee"/><circle cx="818.15" cy="261.6" r="3.3" fill="none" stroke="#111" stroke-width="1"/><circle cx="818.15" cy="261.6" r="1.2" fill="none" stroke="#111" stroke-width="0.6"/><path d="M813.05 261.6 H823.25 M818.15 256.5 V266.7" stroke="#111" stroke-width="0.8"/><rect x="824.3" y="256" width="11.15" height="11.15" fill="#ffffff"/><rect x="836.05" y="256" width="11.15" height="11.15" fill="#231f20"/><rect x="847.8" y="256" width="11.15" height="11.15" fill="#e02027"/><rect x="859.55" y="256" width="11.15" height="11.15" fill="#fde020"/><rect x="871.3" y="256" width="11.15" height="11.15" fill="#109b48"/><rect x="883.05" y="256" width="11.15" height="11.15" fill="#1ba1e2"/><rect x="894.8" y="256" width="11.15" height="11.15" fill="#2e3790"/><rect x="906.55" y="256" width="11.15" height="11.15" fill="#e0128a"/><rect x="918.3" y="256" width="11.15" height="11.15" fill="#b31e3a"/><rect x="930.05" y="256" width="11.15" height="11.15" fill="#e14235"/><rect x="941.8" y="256" width="11.15" height="11.15" fill="#e0622c"/><rect x="953.55" y="256" width="11.15" height="11.15" fill="#e88f2b"/><rect x="965.3" y="256" width="11.15" height="11.15" fill="#eea34a"/><rect x="800.8" y="267.8" width="11.15" height="11.15" fill="#e3d73c"/><rect x="812.55" y="267.8" width="11.15" height="11.15" fill="#c9cf3a"/><rect x="824.3" y="267.8" width="11.15" height="11.15" fill="#7ab548"/><rect x="836.05" y="267.8" width="11.15" height="11.15" fill="#40a84a"/><rect x="847.8" y="267.8" width="11.15" height="11.15" fill="#0e8542"/><rect x="859.55" y="267.8" width="11.15" height="11.15" fill="#0c6c3a"/><rect x="871.3" y="267.8" width="11.15" height="11.15" fill="#2eaa80"/><rect x="883.05" y="267.8" width="11.15" height="11.15" fill="#1b9b95"/><rect x="894.8" y="267.8" width="11.15" height="11.15" fill="#2f9ad5"/><rect x="906.55" y="267.8" width="11.15" height="11.15" fill="#2277b8"/><rect x="918.3" y="267.8" width="11.15" height="11.15" fill="#2d3e92"/><rect x="930.05" y="267.8" width="11.15" height="11.15" fill="#27246c"/><rect x="941.8" y="267.8" width="11.15" height="11.15" fill="#6a2f8f"/><rect x="953.55" y="267.8" width="11.15" height="11.15" fill="#8d3292"/><rect x="965.3" y="267.8" width="11.15" height="11.15" fill="#8e2063"/><rect x="800.8" y="279.6" width="11.15" height="11.15" fill="#cc2467"/><rect x="812.55" y="279.6" width="11.15" height="11.15" fill="#df3188"/><rect x="824.3" y="279.6" width="11.15" height="11.15" fill="#bfae8e"/><rect x="836.05" y="279.6" width="11.15" height="11.15" fill="#9b8c81"/><rect x="847.8" y="279.6" width="11.15" height="11.15" fill="#7b6a5a"/><rect x="859.55" y="279.6" width="11.15" height="11.15" fill="#5c4c41"/><rect x="871.3" y="279.6" width="11.15" height="11.15" fill="#b98f6e"/><rect x="883.05" y="279.6" width="11.15" height="11.15" fill="#a07e52"/><rect x="894.8" y="279.6" width="11.15" height="11.15" fill="#8b6440"/><rect x="906.55" y="279.6" width="11.15" height="11.15" fill="#7c4d26"/><rect x="918.3" y="279.6" width="11.15" height="11.15" fill="#673b17"/><rect x="930.05" y="279.6" width="11.15" height="11.15" fill="#472512"/><defs><linearGradient id="sg1"><stop offset="0" stop-color="#fff"/><stop offset="1" stop-color="#000"/></linearGradient><linearGradient id="sg2"><stop offset="0" stop-color="#fde020"/><stop offset="1" stop-color="#e04a2a"/></linearGradient><linearGradient id="sg3"><stop offset="0" stop-color="#2a80c8"/><stop offset="1" stop-color="#e8f0f8"/></linearGradient></defs><rect x="941.8" y="279.6" width="11.15" height="11.15" fill="url(#sg1)"/><rect x="953.55" y="279.6" width="11.15" height="11.15" fill="url(#sg2)"/><rect x="965.3" y="279.6" width="11.15" height="11.15" fill="url(#sg3)"/><rect x="800.8" y="291.4" width="11.15" height="11.15" fill="#111"/><circle cx="806.4" cy="297.0" r="4.6" fill="#e8e8e8"/><circle cx="806.4" cy="297.0" r="2.5" fill="none" stroke="#bbb" stroke-width="0.6"/><rect x="812.55" y="291.4" width="11.15" height="11.15" fill="#f4f0d8"/><path d="M812.55 292.4 Q818.15 295.4 823.75 292.4 V301.4 Q818.15 298.4 812.55 301.4Z" fill="#5aae3a"/><rect x="816.05" y="294.9" width="4" height="4" fill="#3d8a2a"/><circle cx="814.05" cy="297.0" r="1" fill="#e8c020"/><circle cx="822.25" cy="297.0" r="1" fill="#e8c020"/><rect x="824.3" y="291.4" width="11.15" height="11.15" fill="#b89a80"/><g fill="none" stroke="#f0e8e0" stroke-width="0.8"><circle cx="827.3" cy="294.4" r="1.6"/><circle cx="832.3" cy="295.4" r="1.8"/><circle cx="828.3" cy="299.4" r="1.7"/><circle cx="833.3" cy="300.4" r="1.3"/></g><g fill="#6a4a30"><circle cx="827.3" cy="294.4" r="0.7"/><circle cx="832.3" cy="295.4" r="0.8"/><circle cx="828.3" cy="299.4" r="0.7"/></g><rect x="836.05" y="291.4" width="11.15" height="11.15" fill="#58aee8"/><path d="M840.05 302.54999999999995 L847.1999999999999 295.4 V302.54999999999995Z" fill="#fff"/><path d="M839.55 302.54999999999995 L847.1999999999999 294.9" stroke="#000" stroke-width="1.1"/><rect x="800.5" y="304.7" width="141.3" height="12.15" fill="#3c3c3c"/><rect x="800.8" y="305.2" width="11.15" height="11.15" fill="#555"/><path d="M802.3 308.2 H805.3 L806.3 309.2 H810.3 V314.2 H802.3Z" fill="#ccc"/><rect x="812.55" y="305.2" width="11.15" height="11.15" fill="#231f20"/><rect x="824.3" y="305.2" width="11.15" height="11.15" fill="#3c3c3e"/><rect x="836.05" y="305.2" width="11.15" height="11.15" fill="#4f5052"/><rect x="847.8" y="305.2" width="11.15" height="11.15" fill="#626366"/><rect x="859.55" y="305.2" width="11.15" height="11.15" fill="#76777a"/><rect x="871.3" y="305.2" width="11.15" height="11.15" fill="#838588"/><rect x="883.05" y="305.2" width="11.15" height="11.15" fill="#939598"/><rect x="894.8" y="305.2" width="11.15" height="11.15" fill="#a7a9ac"/><rect x="906.55" y="305.2" width="11.15" height="11.15" fill="#bcbec0"/><rect x="918.3" y="305.2" width="11.15" height="11.15" fill="#d1d3d4"/><rect x="930.05" y="305.2" width="11.15" height="11.15" fill="#e3e4e5"/><rect x="800.5" y="317.6" width="82.55" height="12.15" fill="#3c3c3c"/><rect x="800.8" y="318.1" width="11.15" height="11.15" fill="#555"/><path d="M802.3 321.1 H805.3 L806.3 322.1 H810.3 V327.1 H802.3Z" fill="#ccc"/><rect x="812.55" y="318.1" width="11.15" height="11.15" fill="#e02027"/><rect x="824.3" y="318.1" width="11.15" height="11.15" fill="#e8692b"/><rect x="836.05" y="318.1" width="11.15" height="11.15" fill="#fcc02f"/><rect x="847.8" y="318.1" width="11.15" height="11.15" fill="#13964a"/><rect x="859.55" y="318.1" width="11.15" height="11.15" fill="#2a4b9b"/><rect x="871.3" y="318.1" width="11.15" height="11.15" fill="#7c3f98"/></svg>
<svg style="left:0;top:0" width="1200" height="732" viewBox="0 0 1200 732"><g fill="#c8c8c8"><rect x="803.5" y="354.5" width="1.5" height="7.5"/><rect x="806" y="354.5" width="1.5" height="7.5"/><path d="M808.3 355 L809.6 354.6 L812.6 362 L811.3 362.4Z"/></g><path d="M814 361 H818 L816 363.2Z" fill="#cfcfcf"/><circle cx="830.8" cy="358.3" r="2.3" fill="none" stroke="#c8c8c8" stroke-width="1.1"/><circle cx="830.8" cy="358.3" r="0.9" fill="#c8c8c8"/><circle cx="835" cy="355.2" r="1.3" fill="#c8c8c8"/><circle cx="835" cy="361.4" r="1.3" fill="#c8c8c8"/><path d="M832.6 357 L834.3 355.8 M832.6 359.6 L834.3 360.8" stroke="#c8c8c8" stroke-width="0.9"/><path d="M848.5 362 V354.5 H851.5 L852.5 355.5 H856.5 V357" fill="none" stroke="#c8c8c8" stroke-width="0.9"/><ellipse cx="857" cy="360" rx="4.3" ry="2.6" fill="#4a4a4a" stroke="#c8c8c8" stroke-width="0.9"/><circle cx="855.5" cy="360" r="1.3" fill="none" stroke="#c8c8c8" stroke-width="0.8"/><circle cx="858.5" cy="360" r="1.3" fill="none" stroke="#c8c8c8" stroke-width="0.8"/><rect x="880" y="354.5" width="8" height="8" fill="#cfcfcf"/><path d="M880 357.2 H888 M880 359.8 H888 M882.7 354.5 V362.5 M885.3 354.5 V362.5" stroke="#333" stroke-width="0.6"/><rect x="885.5" y="357.5" width="2" height="2" fill="#111"/><path d="M889.5 361 H893.5 L891.5 363.2Z" fill="#cfcfcf"/><rect x="903.5" y="354.5" width="8" height="8" fill="none" stroke="#636363" stroke-width="0.9"/><path d="M905.5 356.8 H909.5 M905.5 358.5 H909.5 M905.5 360.2 H909.5" stroke="#636363" stroke-width="0.7"/><path d="M925 356.0 Q925 354.8 926 354.8 H928.6 L929.6 356.0 H934.2 Q935 356.0 935 357.0 V362.2 Q935 362.8 934.4 362.8 H925.6 Q925 362.8 925 362.2Z" fill="#cdcdcd"/><path d="M925 357.40000000000003 H935" stroke="#8a8a8a" stroke-width="0.5"/><path d="M947.5 354 H956.0 V362.5 H951.0 V358.5 H947.5Z" fill="#d0d0d0"/><path d="M948.0 359 H950.5 V361.8Z" fill="#d0d0d0"/><g fill="none" stroke="#5c5c5c" stroke-width="1"><path d="M968.5 355.5 H977.5"/><path d="M971.5 355.5 V354.0 H974.5 V355.5"/><path d="M969.7 356.5 V362.5 H976.3 V356.5"/><path d="M971.8 357.5 V361.5 M974.2 357.5 V361.5"/></g><rect x="998" y="356.6" width="1.1" height="1.1" fill="#7a7a7a"/><rect x="998" y="358.6" width="1.1" height="1.1" fill="#7a7a7a"/><rect x="996" y="358.6" width="1.1" height="1.1" fill="#7a7a7a"/><rect x="998" y="360.6" width="1.1" height="1.1" fill="#7a7a7a"/><rect x="996" y="360.6" width="1.1" height="1.1" fill="#7a7a7a"/><rect x="994" y="360.6" width="1.1" height="1.1" fill="#7a7a7a"/><rect x="998" y="362.6" width="1.1" height="1.1" fill="#7a7a7a"/><rect x="996" y="362.6" width="1.1" height="1.1" fill="#7a7a7a"/><rect x="994" y="362.6" width="1.1" height="1.1" fill="#7a7a7a"/><rect x="992" y="362.6" width="1.1" height="1.1" fill="#7a7a7a"/></svg>
<div class="pn" style="left:796px;top:368px;width:205px;height:143px"></div>
<div class="tabbar" style="left:796px;top:368px;width:205px"></div>
<div class="tab on" style="left:796px;top:368px;width:39px;padding-left:6px">Layers</div>
<div class="menu" style="left:987px;top:371.5px"></div>
<div class="a" style="left:800px;top:388px;width:197px;height:106px;background:#474747;border:1px solid #2e2e2e"></div>
<div class="a" style="left:801px;top:389px;width:195px;height:16.5px;background:#5b6679;border-bottom:1px solid #3a3f48"></div>
<div class="a" style="left:818px;top:389px;width:1px;height:16px;background:#3d4450"></div>
<div class="a" style="left:835px;top:389px;width:1px;height:16px;background:#3d4450"></div>
<div class="a" style="left:836.5px;top:389.5px;width:3.5px;height:15px;background:#4f7cf0"></div>
<div class="a" style="left:840.5px;top:389px;width:1px;height:16px;background:#3d4450"></div>
<div class="a" style="left:967px;top:389px;width:1px;height:16px;background:#3d4450"></div>
<svg style="left:803px;top:391px" width="14" height="10" viewBox="0 0 14 10"><path d="M0.6 4.6 Q5.8 -0.6 11 4.6 Q5.8 9.8 0.6 4.6Z" fill="#cfcfcf"/><circle cx="5.8" cy="4.6" r="2.3" fill="#2e3440"/><circle cx="6.5" cy="3.9" r="0.8" fill="#e0e0e0"/></svg>
<div class="a" style="left:845px;top:393.8px;border-top:3px solid transparent;border-bottom:3px solid transparent;border-left:5px solid #d8d8d8"></div>
<div class="a" style="left:859.3px;top:389.2px;width:14.2px;height:15px;background:#fff;border:1px solid #1a1a1a;border-radius:1px"></div>
<svg style="left:860px;top:390px" width="13" height="13" viewBox="0 0 13 13"><g><rect x="1" y="5" width="1.2" height="1" fill="#555"/><rect x="2.5" y="5.5" width="1.5" height="1" fill="#c9b060"/><rect x="4.5" y="4.5" width="1.2" height="1.2" fill="#8a8a8a"/><rect x="6" y="5" width="1" height="1" fill="#3a8ab0"/><rect x="5.5" y="2" width="1" height="1.5" fill="#d05040"/><rect x="3" y="7" width="1.2" height="1" fill="#666"/><rect x="9" y="6" width="1.2" height="1" fill="#e0a030"/><rect x="10.5" y="6" width="1" height="1" fill="#3a9a50"/><rect x="9" y="8" width="1.2" height="1" fill="#c04040"/><rect x="10.5" y="8" width="1" height="1" fill="#d9c050"/><rect x="9" y="10" width="1.2" height="1" fill="#c02050"/><rect x="10.5" y="10" width="1" height="1" fill="#2a4a9b"/></g></svg>
<div class="pt" style="left:878px;top:391.5px;color:#e8e8e8;font-size:9.3px">Layer 1</div>
<div class="a" style="left:971px;top:393px;width:8px;height:8px;border-radius:50%;border:1px solid #d0d0d0"></div>
<svg style="left:989px;top:390px" width="6" height="6" viewBox="0 0 6 6"><path d="M0 0 H6 V6Z" fill="#ddd"/></svg>
<div class="pt" style="left:801px;top:498px;font-size:9.3px">1 Layer</div>
<svg style="left:0;top:0" width="1200" height="732" viewBox="0 0 1200 732"><circle cx="888.5" cy="501.5" r="3.3" fill="none" stroke="#666" stroke-width="0.9"/><path d="M886 504 L882.5 507.5" stroke="#666" stroke-width="1"/><rect x="903.5" y="498.5" width="7" height="7" fill="none" stroke="#d0d0d0" stroke-width="1"/><rect x="906.5" y="501.5" width="6" height="6" fill="#666" stroke="#888" stroke-width="0.7"/><path d="M924 498 V501 H927" fill="none" stroke="#ccc" stroke-width="0.9"/><path d="M926 499.3 L924 498" stroke="#ccc"/><path d="M926.5 498.5 H935.0 V507.0 H930.0 V503.0 H926.5Z" fill="#d0d0d0"/><path d="M927.0 503.5 H929.5 V506.3Z" fill="#d0d0d0"/><path d="M947.5 498 H956.0 V506.5 H951.0 V502.5 H947.5Z" fill="#d0d0d0"/><path d="M948.0 503 H950.5 V505.8Z" fill="#d0d0d0"/><g fill="none" stroke="#5c5c5c" stroke-width="1"><path d="M968.5 499.5 H977.5"/><path d="M971.5 499.5 V498.0 H974.5 V499.5"/><path d="M969.7 500.5 V506.5 H976.3 V500.5"/><path d="M971.8 501.5 V505.5 M974.2 501.5 V505.5"/></g><rect x="998" y="501" width="1.1" height="1.1" fill="#7a7a7a"/><rect x="998" y="503" width="1.1" height="1.1" fill="#7a7a7a"/><rect x="996" y="503" width="1.1" height="1.1" fill="#7a7a7a"/><rect x="998" y="505" width="1.1" height="1.1" fill="#7a7a7a"/><rect x="996" y="505" width="1.1" height="1.1" fill="#7a7a7a"/><rect x="994" y="505" width="1.1" height="1.1" fill="#7a7a7a"/><rect x="998" y="507" width="1.1" height="1.1" fill="#7a7a7a"/><rect x="996" y="507" width="1.1" height="1.1" fill="#7a7a7a"/><rect x="994" y="507" width="1.1" height="1.1" fill="#7a7a7a"/><rect x="992" y="507" width="1.1" height="1.1" fill="#7a7a7a"/></svg>
<div class="pn" style="left:796px;top:513px;width:205px;height:195px"></div>
<div class="tabbar" style="left:796px;top:513px;width:205px"></div>
<div class="tab" style="left:796px;top:513px;width:39px;padding-left:5px">Stroke</div>
<div class="tab on" style="left:835px;top:513px;width:53px;padding-left:11px">Gradient</div>
<svg style="left:839px;top:516px" width="5" height="9" viewBox="0 0 5 9"><path d="M0.5 3.5 L2.5 1 L4.5 3.5 M0.5 5.5 L2.5 8 L4.5 5.5" fill="none" stroke="#bbb" stroke-width="0.8"/></svg>
<div class="tab" style="left:888px;top:513px;width:70px;padding-left:6px">Transparency</div>
<div class="menu" style="left:987px;top:516.5px"></div>
<div class="a" style="left:801.5px;top:533.5px;width:24.5px;height:24.5px;background:linear-gradient(90deg,#fff,#222);border:1px solid #2a2a2a"></div>
<div class="a" style="left:830px;top:543px;border-left:3px solid transparent;border-right:3px solid transparent;border-top:3.5px solid #ddd"></div>
<svg style="left:801.5px;top:564px" width="26" height="26" viewBox="0 0 26 26"><rect x="8.3" y="8.6" width="15.8" height="15.8" fill="#fff" stroke="#1e1e1e" stroke-width="0.7"/><rect x="13.2" y="13.4" width="6" height="6.2" fill="#2e2e2e"/><rect x="0.2" y="0" width="15.1" height="15.6" fill="#fdf8e0" stroke="#1e1e1e" stroke-width="0.8"/><rect x="1.1" y="0.9" width="13.3" height="13.8" fill="#eedc84"/><path d="M8.6 24.2 L23.8 9" stroke="#f0141e" stroke-width="2"/></svg>
<svg style="left:806px;top:597px" width="16" height="14" viewBox="0 0 16 14"><g fill="none" stroke="#777" stroke-width="0.9"><rect x="1.5" y="1.5" width="6" height="4"/><rect x="6.5" y="7.5" width="7" height="4.5"/><path d="M10 3 L12 3 L11 4.5Z M3 10 L5 10 L4 8.5Z" fill="#777"/></g></svg>
<div class="pt" style="left:848px;top:536.5px;color:#d0d0d0;font-weight:bold;font-size:9px">Type:</div>
<div class="ddb" style="left:874px;top:533.5px;width:121px;height:15px;background:#555"></div>
<div class="a" style="left:979.5px;top:535px;width:1px;height:12px;background:#3a3a3a;box-shadow:1px 0 0 #666"></div>
<div class="a" style="left:984px;top:539px;border-left:3.5px solid transparent;border-right:3.5px solid transparent;border-top:4.5px solid #e0e0e0;z-index:3"></div>
<div class="pt dim" style="left:841.5px;top:558px;font-size:9.2px">Stroke:</div>
<svg style="left:874px;top:556px" width="60" height="16" viewBox="0 0 60 16"><g stroke="#3a3a3a" fill="#585858"><rect x="0.5" y="0.5" width="19" height="15"/><rect x="19.5" y="0.5" width="19" height="15"/><rect x="38.5" y="0.5" width="19" height="15"/></g><g fill="none" stroke="#767676" stroke-width="1.6"><path d="M4.5 14 V4.5 H14"/><path d="M24 14 V6 L25.5 4.5 H33"/><path d="M43 14 V4.5 H53 M46 14 V7.5 H53"/></g></svg>
<svg style="left:855px;top:580px" width="14" height="12" viewBox="0 0 14 12"><path d="M1 11 H12 M1 11 L10 3" fill="none" stroke="#777" stroke-width="0.9"/><path d="M6 7 Q8 9 7 11" fill="none" stroke="#777" stroke-width="0.7"/></svg>
<div class="ddb" style="left:874px;top:578.5px;width:64px;height:15px"></div>
<svg style="left:854px;top:600px" width="16" height="16" viewBox="0 0 16 16"><path d="M3 1 V14 M1 3 L3 1 L5 3 M1 12 L3 14 L5 12" fill="none" stroke="#777" stroke-width="0.9"/><ellipse cx="10" cy="7.5" rx="4.5" ry="3.5" fill="none" stroke="#777"/></svg>
<div class="ddb" style="left:874px;top:599.5px;width:64px;height:15.5px"></div>
<div class="a" style="left:805px;top:627.5px;width:167px;height:15px;background:linear-gradient(90deg,#fff,#8c8c8c 50%,#231f20);border:1px solid #2a2a2a"></div>
<svg style="left:981px;top:630px" width="10" height="12" viewBox="0 0 10 12"><path d="M1 2.5 H9 M3.5 2.5 V1 H6.5 V2.5 M2 3.5 V11 H8 V3.5 M4 5 V9.5 M6 5 V9.5" fill="none" stroke="#6a6a6a"/></svg>
<div class="pt dim" style="left:837.5px;top:668.5px;font-size:9.2px">Opacity:</div>
<div class="ddb" style="left:874px;top:665.5px;width:64px;height:15.5px"></div>
<div class="pt dim" style="left:834px;top:689.5px;font-size:9.2px">Location:</div>
<div class="ddb" style="left:874px;top:687.5px;width:64px;height:15.5px"></div>
<div class="pn" style="left:796px;top:711px;width:205px;height:21px"></div>
<div class="tabbar" style="left:796px;top:711px;width:205px;height:15px"></div>
<div class="tab on" style="left:796px;top:711px;width:72px;height:15px;padding-left:6px">Graphic Styles</div>
<div class="menu" style="left:987px;top:715px"></div>
<div class="a" style="left:796px;top:726px;width:205px;height:1px;background:#2e2e2e"></div>
<div class="a" style="left:892px;top:728px;width:11px;height:3px;background:repeating-linear-gradient(90deg,#1e1e1e 0 1px,transparent 1px 2px)"></div><div class="pn" style="left:1004px;top:41px;width:196px;height:227px"></div>
<div class="tabbar" style="left:1004px;top:41px;width:196px"></div>
<div class="tab on" style="left:1004px;top:41px;width:43px;padding-left:6px">Actions</div>
<div class="menu" style="left:1190px;top:44.5px"></div>
<div class="a" style="left:1008px;top:60px;width:192px;height:191px;background:#3a3a3a;border:1px solid #2e2e2e"></div>
<svg style="left:1008px;top:60px" width="192" height="191" viewBox="0 0 192 191"><rect x="1" y="0.8" width="16.5" height="14.9" fill="#4d4d4d"/><rect x="18.5" y="0.8" width="17" height="14.9" fill="#4d4d4d"/><rect x="36.5" y="0.8" width="144" height="14.9" fill="#4d4d4d"/><path d="M5.2 8.8 L7.8 11.4 L12.8 5.3999999999999995" fill="none" stroke="#dadada" stroke-width="1.4"/><rect x="22.5" y="4.3" width="9" height="8" fill="#6a6a6a" stroke="#999" stroke-width="0.8"/><rect x="23.2" y="5.0" width="7.6" height="1.5" fill="#a0a0a0"/><rect x="25" y="8.8" width="4" height="1" fill="#ddd"/><path d="M39.3 6.3 L46 6.3 L42.65 11.3Z" fill="#ddd"/><path d="M53.5 4.8 H57.5 L58.5 5.8 H64 V12.8 H53.5Z" fill="#bbb"/><rect x="1" y="16.7" width="16.5" height="14.9" fill="#575757"/><rect x="18.5" y="16.7" width="17" height="14.9" fill="#575757"/><rect x="36.5" y="16.7" width="144" height="14.9" fill="#575757"/><path d="M5.2 24.7 L7.8 27.299999999999997 L12.8 21.299999999999997" fill="none" stroke="#dadada" stroke-width="1.4"/><path d="M57.5 21.2 L62 24.2 L57.5 27.2Z" fill="#ddd"/><rect x="1" y="32.6" width="16.5" height="14.9" fill="#575757"/><rect x="18.5" y="32.6" width="17" height="14.9" fill="#575757"/><rect x="36.5" y="32.6" width="144" height="14.9" fill="#575757"/><path d="M5.2 40.6 L7.8 43.2 L12.8 37.2" fill="none" stroke="#dadada" stroke-width="1.4"/><path d="M57.5 37.1 L62 40.1 L57.5 43.1Z" fill="#ddd"/><rect x="1" y="48.5" width="16.5" height="14.9" fill="#575757"/><rect x="18.5" y="48.5" width="17" height="14.9" fill="#575757"/><rect x="36.5" y="48.5" width="144" height="14.9" fill="#575757"/><path d="M5.2 56.5 L7.8 59.1 L12.8 53.1" fill="none" stroke="#dadada" stroke-width="1.4"/><path d="M57.5 53.0 L62 56.0 L57.5 59.0Z" fill="#ddd"/><rect x="1" y="64.4" width="16.5" height="14.9" fill="#575757"/><rect x="18.5" y="64.4" width="17" height="14.9" fill="#575757"/><rect x="36.5" y="64.4" width="144" height="14.9" fill="#575757"/><path d="M5.2 72.4 L7.8 75.0 L12.8 69.0" fill="none" stroke="#dadada" stroke-width="1.4"/><rect x="22.5" y="67.9" width="9" height="8" fill="#6a6a6a" stroke="#999" stroke-width="0.8"/><rect x="23.2" y="68.60000000000001" width="7.6" height="1.5" fill="#a0a0a0"/><path d="M57.5 68.9 L62 71.9 L57.5 74.9Z" fill="#ddd"/><rect x="1" y="80.3" width="16.5" height="14.9" fill="#575757"/><rect x="18.5" y="80.3" width="17" height="14.9" fill="#575757"/><rect x="36.5" y="80.3" width="144" height="14.9" fill="#575757"/><path d="M5.2 88.3 L7.8 90.89999999999999 L12.8 84.89999999999999" fill="none" stroke="#dadada" stroke-width="1.4"/><rect x="22.5" y="83.8" width="9" height="8" fill="#6a6a6a" stroke="#999" stroke-width="0.8"/><rect x="23.2" y="84.5" width="7.6" height="1.5" fill="#a0a0a0"/><path d="M57.5 84.8 L62 87.8 L57.5 90.8Z" fill="#ddd"/><rect x="1" y="96.2" width="16.5" height="14.9" fill="#575757"/><rect x="18.5" y="96.2" width="17" height="14.9" fill="#575757"/><rect x="36.5" y="96.2" width="144" height="14.9" fill="#575757"/><path d="M5.2 104.2 L7.8 106.8 L12.8 100.8" fill="none" stroke="#dadada" stroke-width="1.4"/><rect x="22.5" y="99.7" width="9" height="8" fill="#6a6a6a" stroke="#999" stroke-width="0.8"/><rect x="23.2" y="100.4" width="7.6" height="1.5" fill="#a0a0a0"/><path d="M57.5 100.7 L62 103.7 L57.5 106.7Z" fill="#ddd"/><rect x="1" y="112.1" width="16.5" height="14.9" fill="#575757"/><rect x="18.5" y="112.1" width="17" height="14.9" fill="#575757"/><rect x="36.5" y="112.1" width="144" height="14.9" fill="#575757"/><path d="M5.2 120.1 L7.8 122.69999999999999 L12.8 116.69999999999999" fill="none" stroke="#dadada" stroke-width="1.4"/><path d="M57.5 116.6 L62 119.6 L57.5 122.6Z" fill="#ddd"/><rect x="1" y="128.0" width="16.5" height="14.9" fill="#575757"/><rect x="18.5" y="128.0" width="17" height="14.9" fill="#575757"/><rect x="36.5" y="128.0" width="144" height="14.9" fill="#575757"/><path d="M5.2 136.0 L7.8 138.6 L12.8 132.6" fill="none" stroke="#dadada" stroke-width="1.4"/><path d="M57.5 132.5 L62 135.5 L57.5 138.5Z" fill="#ddd"/><rect x="1" y="143.9" width="16.5" height="14.9" fill="#575757"/><rect x="18.5" y="143.9" width="17" height="14.9" fill="#575757"/><rect x="36.5" y="143.9" width="144" height="14.9" fill="#575757"/><path d="M5.2 151.9 L7.8 154.5 L12.8 148.5" fill="none" stroke="#dadada" stroke-width="1.4"/><path d="M57.5 148.4 L62 151.4 L57.5 154.4Z" fill="#ddd"/><rect x="1" y="159.8" width="16.5" height="14.9" fill="#575757"/><rect x="18.5" y="159.8" width="17" height="14.9" fill="#575757"/><rect x="36.5" y="159.8" width="144" height="14.9" fill="#575757"/><path d="M5.2 167.8 L7.8 170.4 L12.8 164.4" fill="none" stroke="#dadada" stroke-width="1.4"/><rect x="22.5" y="163.3" width="9" height="8" fill="#6a6a6a" stroke="#999" stroke-width="0.8"/><rect x="23.2" y="164.0" width="7.6" height="1.5" fill="#a0a0a0"/><rect x="25" y="167.8" width="4" height="1" fill="#ddd"/><path d="M57.5 164.3 L62 167.3 L57.5 170.3Z" fill="#ddd"/><rect x="1" y="175.70000000000002" width="16.5" height="14.9" fill="#575757"/><rect x="18.5" y="175.70000000000002" width="17" height="14.9" fill="#575757"/><rect x="36.5" y="175.70000000000002" width="144" height="14.9" fill="#575757"/><path d="M5.2 183.70000000000002 L7.8 186.3 L12.8 180.3" fill="none" stroke="#dadada" stroke-width="1.4"/><rect x="22.5" y="179.20000000000002" width="9" height="8" fill="#6a6a6a" stroke="#999" stroke-width="0.8"/><rect x="23.2" y="179.9" width="7.6" height="1.5" fill="#a0a0a0"/><path d="M57.5 180.20000000000002 L62 183.20000000000002 L57.5 186.20000000000002Z" fill="#ddd"/></svg>
<div class="pt" style="left:1076.7px;top:64.2px;color:#dcdcdc;letter-spacing:-0.005px">Default Actions</div>
<div class="pt" style="left:1077.3px;top:80.1px;color:#dcdcdc;letter-spacing:-0.046px">Opacity 60 (selection)</div>
<div class="pt" style="left:1077.3px;top:96.0px;color:#dcdcdc;letter-spacing:-0.134px">Opacity 40 Screen (select...</div>
<div class="pt" style="left:1077.3px;top:111.89999999999999px;color:#dcdcdc;letter-spacing:-0.089px">Apply Default Style (selec...</div>
<div class="pt" style="left:1077.3px;top:127.8px;color:#dcdcdc;letter-spacing:-0.238px">Save For Web GIF 64 Dith...</div>
<div class="pt" style="left:1077.3px;top:143.70000000000002px;color:#dcdcdc;letter-spacing:-0.471px">Save For Web JPG Medium</div>
<div class="pt" style="left:1077.3px;top:159.60000000000002px;color:#dcdcdc;letter-spacing:-0.462px">Save For Web PNG 24</div>
<div class="pt" style="left:1077.3px;top:175.5px;color:#dcdcdc;letter-spacing:-0.079px">Simplify (selection)</div>
<div class="pt" style="left:1077.3px;top:191.4px;color:#dcdcdc;letter-spacing:-0.031px">Simplify Straight (selection)</div>
<div class="pt" style="left:1077.3px;top:207.3px;color:#dcdcdc;letter-spacing:-0.440px">Revert</div>
<div class="pt" style="left:1077.3px;top:223.20000000000002px;color:#dcdcdc;letter-spacing:-0.192px">Delete Unused Panel Items</div>
<div class="pt" style="left:1077.3px;top:239.10000000000002px;color:#dcdcdc;letter-spacing:-0.111px">Move Dialog (selection)</div>
<div class="a" style="left:1189.3px;top:61px;width:10.7px;height:189px;background:#383838"></div>
<div class="a" style="left:1190px;top:75px;width:9px;height:86.5px;background:#939393;border-radius:0"></div>
<svg style="left:1190px;top:63px" width="9" height="186" viewBox="0 0 9 186"><path d="M1 5 L4.5 1 L8 5Z M1 180 L4.5 184 L8 180Z" fill="#ddd"/></svg>
<svg style="left:0;top:0" width="1200" height="732" viewBox="0 0 1200 732"><rect x="1064" y="255.8" width="7.3" height="7" fill="#5e5e5e"/><circle cx="1089.4" cy="259.3" r="3.7" fill="#5e5e5e"/><path d="M1107.3 255.5 L1116 259.3 L1107.3 263Z" fill="#5e5e5e"/><path d="M1128 256.5 Q1128 255.3 1129 255.3 H1131.6 L1132.6 256.5 H1137.6000000000001 Q1138.4 256.5 1138.4 257.5 V263.2 Q1138.4 263.8 1137.8000000000002 263.8 H1128.6 Q1128 263.8 1128 263.2Z" fill="#cdcdcd"/><path d="M1128 257.90000000000003 H1138.4" stroke="#8a8a8a" stroke-width="0.5"/><path d="M1151 254.9 H1159.2 V263.0 H1154.5 V259.4 H1151Z" fill="#d0d0d0"/><path d="M1151.5 259.9 H1154 V262.7Z" fill="#d0d0d0"/><g fill="none" stroke="#5c5c5c" stroke-width="1"><path d="M1171.8 256.5 H1180.8"/><path d="M1174.8 256.5 V255.0 H1177.8 V256.5"/><path d="M1173.0 257.5 V263.5 H1179.6 V257.5"/><path d="M1175.1 258.5 V262.5 M1177.5 258.5 V262.5"/></g><rect x="1200" y="258" width="1.1" height="1.1" fill="#7a7a7a"/><rect x="1200" y="260" width="1.1" height="1.1" fill="#7a7a7a"/><rect x="1198" y="260" width="1.1" height="1.1" fill="#7a7a7a"/><rect x="1200" y="262" width="1.1" height="1.1" fill="#7a7a7a"/><rect x="1198" y="262" width="1.1" height="1.1" fill="#7a7a7a"/><rect x="1196" y="262" width="1.1" height="1.1" fill="#7a7a7a"/><rect x="1200" y="264" width="1.1" height="1.1" fill="#7a7a7a"/><rect x="1198" y="264" width="1.1" height="1.1" fill="#7a7a7a"/><rect x="1196" y="264" width="1.1" height="1.1" fill="#7a7a7a"/><rect x="1194" y="264" width="1.1" height="1.1" fill="#7a7a7a"/></svg>
<div class="pn" style="left:1004px;top:270px;width:196px;height:230px"></div>
<div class="tabbar" style="left:1004px;top:270px;width:196px"></div>
<div class="tab" style="left:1004px;top:270px;width:35px;padding-left:6px">Links</div>
<div class="tab" style="left:1039px;top:270px;width:49px;padding-left:6px">Libraries</div>
<div class="tab on" style="left:1088px;top:270px;width:75px;padding-left:6px">Document Info</div>
<div class="menu" style="left:1190px;top:273.5px"></div>
<div class="pt" style="left:1009.5px;top:290.7px;font-size:9.2px;color:#d4d4d4;letter-spacing:-0.111px">Document:</div>
<div class="pt" style="left:1009.5px;top:310.6px;font-size:9.2px;color:#d4d4d4;letter-spacing:-0.093px">Name: palette.ai</div>
<div class="pt" style="left:1009.5px;top:330.7px;font-size:9.2px;color:#d4d4d4;letter-spacing:-0.195px">Color Mode: RGB color</div>
<div class="pt" style="left:1009.5px;top:340.7px;font-size:9.2px;color:#d4d4d4;letter-spacing:-0.139px">Color Profile: sRGB IEC61966-2.1</div>
<div class="pt" style="left:1009.5px;top:350.7px;font-size:9.2px;color:#d4d4d4;letter-spacing:-0.035px">Ruler Units: pixels</div>
<div class="pt" style="left:1009.5px;top:360.7px;font-size:9.2px;color:#d4d4d4;letter-spacing:0.086px">Artboard Dimensions: 1230 px x 804.15</div>
<div class="pt" style="left:1009.5px;top:370.7px;font-size:9.2px;color:#d4d4d4;letter-spacing:0.283px">px</div>
<div class="pt" style="left:1009.5px;top:380.7px;font-size:9.2px;color:#d4d4d4;letter-spacing:-0.179px">Show Images in Outline Mode: OFF</div>
<div class="pt" style="left:1009.5px;top:390.7px;font-size:9.2px;color:#d4d4d4;letter-spacing:-0.073px">Highlight Substituted Fonts: OFF</div>
<div class="pt" style="left:1009.5px;top:400.7px;font-size:9.2px;color:#d4d4d4;letter-spacing:-0.071px">Highlight Substituted Glyphs: OFF</div>
<div class="pt" style="left:1009.5px;top:410.7px;font-size:9.2px;color:#d4d4d4;letter-spacing:-0.021px">Preserve Text Editability</div>
<div class="pt" style="left:1009.5px;top:420.7px;font-size:9.2px;color:#d4d4d4;letter-spacing:-0.238px">Simulate Colored Paper: OFF</div>
<svg style="left:0;top:0" width="1200" height="732" viewBox="0 0 1200 732"><rect x="1199" y="491" width="1.1" height="1.1" fill="#7a7a7a"/><rect x="1199" y="493" width="1.1" height="1.1" fill="#7a7a7a"/><rect x="1197" y="493" width="1.1" height="1.1" fill="#7a7a7a"/><rect x="1199" y="495" width="1.1" height="1.1" fill="#7a7a7a"/><rect x="1197" y="495" width="1.1" height="1.1" fill="#7a7a7a"/><rect x="1195" y="495" width="1.1" height="1.1" fill="#7a7a7a"/><rect x="1199" y="497" width="1.1" height="1.1" fill="#7a7a7a"/><rect x="1197" y="497" width="1.1" height="1.1" fill="#7a7a7a"/><rect x="1195" y="497" width="1.1" height="1.1" fill="#7a7a7a"/><rect x="1193" y="497" width="1.1" height="1.1" fill="#7a7a7a"/></svg>
<div class="pn" style="left:1004px;top:502px;width:196px;height:230px"></div>
<div class="tabbar" style="left:1004px;top:502px;width:196px"></div>
<div class="tab" style="left:1004px;top:502px;width:52px;padding-left:6px">Variables</div>
<div class="tab on" style="left:1056px;top:502px;width:61px;padding-left:6px">Appearance</div>
<div class="menu" style="left:1190px;top:505.5px"></div>
<div class="a" style="left:1008px;top:521.5px;width:192px;height:188.5px;background:#474747;border:1px solid #2e2e2e;border-right:none"></div>
<svg style="left:1008px;top:520px" width="192" height="190" viewBox="0 0 192 190"><rect x="1" y="2.5" width="191" height="19.299999999999955" fill="#4e4e4e"/><rect x="1" y="22.299999999999955" width="20" height="20.100000000000023" fill="#4e4e4e"/><rect x="22" y="22.299999999999955" width="170" height="20.100000000000023" fill="#4e4e4e"/><rect x="1" y="43.39999999999998" width="20" height="20.5" fill="#4e4e4e"/><rect x="22" y="43.39999999999998" width="170" height="20.5" fill="#5a5a5a"/><rect x="1" y="65" width="20" height="19.700000000000045" fill="#4e4e4e"/><rect x="22" y="65" width="170" height="19.700000000000045" fill="#4e4e4e"/><rect x="1" y="85.70000000000005" width="20" height="19.799999999999955" fill="#4e4e4e"/><rect x="22" y="85.70000000000005" width="170" height="19.799999999999955" fill="#5a5a5a"/><rect x="1" y="106.5" width="20" height="20.200000000000045" fill="#4e4e4e"/><rect x="22" y="106.5" width="170" height="20.200000000000045" fill="#4e4e4e"/><rect x="1" y="127.70000000000005" width="191" height="1" fill="#333"/><path d="M5.2 32.84999999999991 Q10.6 27.249999999999908 16 32.84999999999991 Q10.6 38.44999999999991 5.2 32.84999999999991Z" fill="#d4d4d4"/><circle cx="10.6" cy="32.84999999999991" r="2.3" fill="#333"/><circle cx="11.3" cy="32.149999999999906" r="0.8" fill="#ddd"/><path d="M5.2 54.14999999999998 Q10.6 48.549999999999976 16 54.14999999999998 Q10.6 59.74999999999998 5.2 54.14999999999998Z" fill="#676767"/><circle cx="10.6" cy="54.14999999999998" r="2.3" fill="#5a5a5a"/><path d="M5.2 75.35000000000002 Q10.6 69.75000000000003 16 75.35000000000002 Q10.6 80.95000000000002 5.2 75.35000000000002Z" fill="#d4d4d4"/><circle cx="10.6" cy="75.35000000000002" r="2.3" fill="#333"/><circle cx="11.3" cy="74.65000000000002" r="0.8" fill="#ddd"/><path d="M5.2 96.10000000000002 Q10.6 90.50000000000003 16 96.10000000000002 Q10.6 101.70000000000002 5.2 96.10000000000002Z" fill="#676767"/><circle cx="10.6" cy="96.10000000000002" r="2.3" fill="#5a5a5a"/><path d="M5.2 117.10000000000002 Q10.6 111.50000000000003 16 117.10000000000002 Q10.6 122.70000000000002 5.2 117.10000000000002Z" fill="#676767"/><circle cx="10.6" cy="117.10000000000002" r="2.3" fill="#4e4e4e"/><rect x="3" y="4.7999999999999545" width="15.5" height="15.5" fill="#eedc84" stroke="#f6f0d0" stroke-width="1.2"/><path d="M25 30.34999999999991 L31 30.34999999999991 L28 35.84999999999991Z" fill="#ddd"/><path d="M25 72.85000000000002 L31 72.85000000000002 L28 78.35000000000002Z" fill="#ddd"/><rect x="76.5" y="26.34999999999991" width="13" height="13" fill="#fff" stroke="#222" stroke-width="0.8"/><rect x="77.5" y="27.34999999999991" width="11" height="11" fill="none" stroke="#bbb" stroke-width="0.6"/><path d="M79.5 36.34999999999991 L86.5 29.34999999999991" stroke="#d0142a" stroke-width="1.8"/><rect x="76.5" y="68.85000000000002" width="13" height="13" fill="#eedc84" stroke="#222" stroke-width="0.8"/><rect x="77.5" y="69.85000000000002" width="11" height="11" fill="none" stroke="#f6f0d0" stroke-width="1.2"/></svg>
<div class="pt" style="left:1048px;top:527.9499999999999px;font-weight:bold;color:#e2e2e2;font-size:9px">No Selection</div>
<div class="pt or" style="left:1048px;top:548.6499999999999px">Stroke:</div>
<div class="pt" style="left:1064.5px;top:569.9499999999999px"><span class="or" style="display:inline-block">Opacity:</span> Default</div>
<div class="pt" style="left:1048px;top:591.15px;color:#e0e0e0">Fill:</div>
<div class="pt" style="left:1064.5px;top:611.9px"><span class="or" style="display:inline-block">Opacity:</span> Default</div>
<div class="pt" style="left:1048px;top:632.9px"><span class="or" style="display:inline-block">Opacity:</span> Default</div>
<svg style="left:1008px;top:711px" width="192" height="14" viewBox="0 0 192 14"><g fill="none">
<rect x="6.5" y="3.5" width="8" height="8" stroke="#ccc" stroke-width="1.2"/>
<rect x="27.5" y="3.5" width="8" height="8" stroke="#999"/><rect x="29" y="5" width="5" height="5" fill="#ccc"/>
<circle cx="124.5" cy="7.5" r="4.3" stroke="#ccc" stroke-width="1.1"/><path d="M121.5 4.5 L127.5 10.5" stroke="#ccc" stroke-width="1.1"/>
<path d="M143 3 H151 V11 H146 V8 H143Z" fill="#666"/>
<path d="M164 4 H172 M166 4 V11 H170 V4 M167 3 H169" stroke="#5e5e5e"/>
</g>
<text x="46" y="11" font-family="Liberation Serif" font-style="italic" font-size="11" fill="#ccc">fx</text><path d="M55 10 L58 10 L56.5 11.5Z" fill="#ccc"/>
</svg>
<div class="a" style="left:1004px;top:726px;width:196px;height:1px;background:#2e2e2e"></div>
<div class="a" style="left:1093px;top:728px;width:11px;height:3px;background:repeating-linear-gradient(90deg,#1e1e1e 0 1px,transparent 1px 2px)"></div>
<div class="a" style="left:615px;top:731px;width:95px;height:1px;background:#8a2a2a"></div>
<div class="a" style="left:710px;top:731px;width:23px;height:1px;background:#9a9a9a"></div>
<div class="a" style="left:733px;top:731px;width:62px;height:1px;background:#1e5a60"></div></body></html>
